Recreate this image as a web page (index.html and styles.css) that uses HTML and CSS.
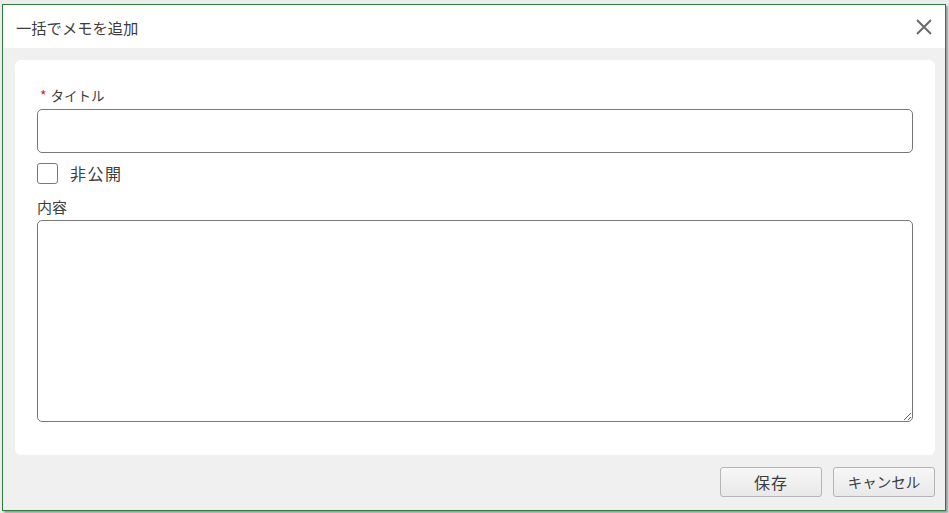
FILE: index.html
```html
<!DOCTYPE html>
<html lang="ja">
<head>
<meta charset="utf-8">
<title>一括でメモを追加</title>
<link rel="stylesheet" href="styles.css">
</head>
<body>
<div class="dialog">
  <div class="dialog-header">
    <span class="dialog-title">一括でメモを追加</span>
    <button class="close-btn" type="button" aria-label="閉じる">
      <svg width="18" height="18" viewBox="0 0 18 18"><path d="M2 2 L16 16 M16 2 L2 16" stroke="#6b6b6b" stroke-width="2" fill="none"/></svg>
    </button>
  </div>
  <div class="dialog-body">
    <div class="card">
      <label class="field-label"><span class="req">*</span><span class="title-text">タイトル</span></label>
      <input class="text-input" type="text">
      <label class="check-row">
        <input class="check" type="checkbox">
        <span class="check-label">非公開</span>
      </label>
      <label class="field-label plain">内容</label>
      <textarea class="text-area"></textarea>
    </div>
    <div class="footer">
      <button class="btn btn-save" type="button">保存</button>
      <button class="btn" type="button">キャンセル</button>
    </div>
  </div>
</div>
</body>
</html>
```
FILE: styles.css
```css
html, body {
  margin: 0;
  padding: 0;
}
body {
  background: #ececec;
  font-family: "Noto Sans CJK JP", "Noto Sans", sans-serif;
  color: #3c3c3c;
  width: 949px;
  height: 513px;
  overflow: hidden;
}
.dialog {
  margin: 4px 0 0 2px;
  width: 942px;
  height: 505px;
  border: 1px solid #2f7a3c;
  background: #f0f0f0;
  box-shadow: 2px 2px 2px rgba(0,0,0,0.35);
  display: flex;
  flex-direction: column;
}
.dialog-header {
  height: 43px;
  background: #fff;
  display: flex;
  align-items: center;
  justify-content: space-between;
  padding: 0 12px 0 13px;
  flex: none;
}
.dialog-title {
  font-size: 15.3px;
  color: #3c3c3c;
  line-height: 20px;
  padding-top: 1px;
}
.close-btn {
  border: 0;
  background: none;
  padding: 0;
  width: 18px;
  height: 18px;
  display: flex;
  margin-top: 1px;
}
.dialog-body {
  flex: 1;
  padding: 12px 10px 0 12px;
  display: flex;
  flex-direction: column;
}
.card {
  background: #fff;
  border-radius: 6px;
  padding: 25px 22px 33px 22px;
  display: flex;
  flex-direction: column;
}
.field-label {
  font-size: 14.5px;
  line-height: 20px;
  color: #3c3c3c;
  display: flex;
  align-items: center;
}
.field-label .req {
  color: #e0203a;
  margin: 0 4px 0 3px;
  font-size: 14px;
}
.title-text {
  font-size: 13.5px;
}
.text-input {
  margin-top: 4px;
  height: 44px;
  box-sizing: border-box;
  border: 1px solid #787878;
  border-radius: 5px;
  font: inherit;
  width: 100%;
}
.check-row {
  display: flex;
  align-items: center;
  margin-top: 9px;
  height: 22px;
}
.check {
  appearance: none;
  -webkit-appearance: none;
  width: 21px;
  height: 21px;
  box-sizing: border-box;
  border: 1px solid #787878;
  border-radius: 3px;
  margin: 0;
  background: #fff;
}
.check-label {
  margin-left: 12px;
  font-size: 16px;
  line-height: 20px;
  letter-spacing: 1.5px;
}
.field-label.plain {
  margin-top: 13px;
  font-size: 15px;
}
.text-area {
  margin-top: 3px;
  height: 202px;
  box-sizing: border-box;
  border: 1px solid #787878;
  border-radius: 5px;
  width: 100%;
  font: inherit;
  resize: vertical;
}
.footer {
  display: flex;
  justify-content: flex-end;
  gap: 11px;
  padding-top: 12px;
}
.btn {
  width: 102px;
  height: 30px;
  box-sizing: border-box;
  border: 1px solid #b5b5b5;
  border-radius: 3px;
  background: linear-gradient(#f7f7f7, #e9e9e9);
  font-family: "Noto Sans CJK JP", "Noto Sans", sans-serif;
  font-size: 14.5px;
  color: #3c3c3c;
  padding: 0;
  line-height: 28px;
}
.btn-save {
  font-size: 16px;
  letter-spacing: 1px;
}
```
